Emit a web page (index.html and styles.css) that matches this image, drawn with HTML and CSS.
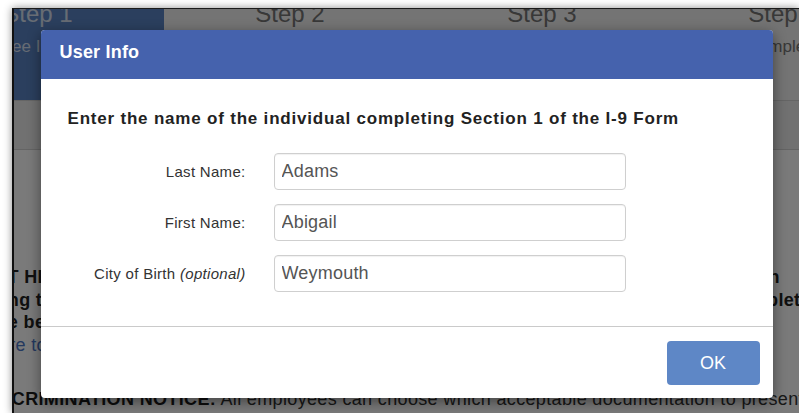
FILE: index.html
```html
<!DOCTYPE html>
<html lang="en">
<head>
<meta charset="utf-8">
<title>Form I-9 – User Info</title>
<link rel="stylesheet" href="styles.css">
</head>
<body>
<div class="window">
  <div class="page">
    <nav class="steps">
      <div class="step step-active">
        <div class="step-title">Step 1</div>
        <div class="step-sub">Employee Information</div>
      </div>
      <div class="step">
        <div class="step-title">Step 2</div>
        <div class="step-sub">Employer Review</div>
      </div>
      <div class="step">
        <div class="step-title">Step 3</div>
        <div class="step-sub">Verification</div>
      </div>
      <div class="step step-last">
        <div class="step-title">Step 4</div>
        <div class="step-sub">Complete</div>
      </div>
    </nav>
    <div class="toolbar"></div>
    <main class="content">
      <p class="notice">
        <span class="line">I-9 START HERE: Employers must ensure all form instructions are available to employees when</span>
        <span class="line">completing this form. Employers are liable for failing to comply with the requirements for completing</span>
        <span class="line">So please be sure to review the form and the Instructions.</span>
      </p>
      <p class="link-line"><a href="#">Select here to view the Form I-9 Instructions.</a></p>
      <p class="anti"><strong>ANTI-DISCRIMINATION NOTICE:</strong> All employees can choose which acceptable documentation to present for Form I-9.</p>
    </main>
  </div>

  <div class="overlay">
    <div class="modal" role="dialog" aria-labelledby="modal-title">
      <header class="modal-header">
        <h2 id="modal-title">User Info</h2>
      </header>
      <div class="modal-body">
        <h3 class="prompt">Enter the name of the individual completing Section 1 of the I-9 Form</h3>
        <div class="form-grid">
          <label for="last">Last Name:</label>
          <input id="last" class="field" type="text" value="Adams">
          <label for="first">First Name:</label>
          <input id="first" class="field" type="text" value="Abigail">
          <label for="city">City of Birth <em>(optional)</em></label>
          <input id="city" class="field" type="text" value="Weymouth">
        </div>
      </div>
      <footer class="modal-footer">
        <button class="btn-ok" type="button">OK</button>
      </footer>
    </div>
  </div>
</div>
</body>
</html>
```

FILE: styles.css
```css
* {
  box-sizing: border-box;
}

html, body {
  margin: 0;
  height: 100%;
}

body {
  background: #ffffff;
  font-family: "Liberation Sans", Arial, sans-serif;
  overflow: hidden;
}

/* browser window frame */
.window {
  position: relative;
  margin: 8px 0 0 12px;
  height: 405px;
  border-top: 1px solid #1a1a1a;
  border-left: 2px solid #111111;
  box-shadow: 0 0 8px rgba(0, 0, 0, 0.45);
  overflow: hidden;
  background: #ffffff;
}

/* page content, scrolled right and down a little */
.page {
  margin: -9px 0 0 -102px;
  width: 1120px;
}

/* wizard step tabs */
.steps {
  display: flex;
  height: 101px;
  background: #f3f3f3;
  border-bottom: 1px solid #d4d4d4;
}

.step {
  width: 252px;
  text-align: center;
  color: #767676;
}

.step-last {
  width: 230px;
}

.step-active {
  background: #5b84c5;
  color: #d8e2f2;
}

.step-title {
  font-size: 24px;
  line-height: 28px;
}

.step-sub {
  margin-top: 9px;
  font-size: 17px;
  line-height: 20px;
  white-space: nowrap;
}

.toolbar {
  height: 49px;
  background: #ececec;
  border-bottom: 1px solid #d2d2d2;
}

.content {
  padding: 116px 0 40px 19px;
  font-size: 18px;
  line-height: 22.5px;
  letter-spacing: 0.35px;
  color: #222222;
}

.content p {
  margin: 0;
  white-space: nowrap;
}

.notice {
  font-weight: bold;
}

.notice .line {
  display: block;
}

.link-line a {
  color: #4d78c6;
  text-decoration: none;
}

.content .anti {
  margin-top: 31.5px;
  color: #333333;
}

.anti strong {
  color: #1d1d1d;
}

/* dimmed backdrop holding the dialog */
.overlay {
  position: absolute;
  inset: 0;
  background: rgba(0, 0, 0, 0.52);
  display: flex;
  justify-content: center;
  align-items: flex-start;
  padding-top: 21px;
}

.modal {
  width: 732px;
  background: #ffffff;
  border-radius: 4px;
  overflow: hidden;
  box-shadow: 0 4px 14px rgba(0, 0, 0, 0.45);
}

.modal-header {
  height: 49px;
  padding: 0 19px;
  background: #4562ad;
}

.modal-header h2 {
  margin: 0;
  font-size: 18px;
  line-height: 45px;
  letter-spacing: 0.2px;
  font-weight: bold;
  color: #ffffff;
}

.modal-body {
  padding: 30px 27px 34px;
}

.prompt {
  margin: 0 0 24px;
  font-size: 17px;
  line-height: 20px;
  letter-spacing: 0.8px;
  font-weight: bold;
  color: #222222;
}

.form-grid {
  display: grid;
  grid-template-columns: 178px 352px;
  column-gap: 28px;
  row-gap: 14px;
  align-items: center;
}

.form-grid label {
  text-align: right;
  font-size: 15px;
  letter-spacing: 0.3px;
  color: #333333;
}

.field {
  height: 37px;
  padding: 0 7px;
  border: 1px solid #cfcfcf;
  border-radius: 4px;
  box-shadow: inset 0 1px 1px rgba(0, 0, 0, 0.06);
  font-family: "Liberation Sans", Arial, sans-serif;
  font-size: 18px;
  letter-spacing: 0.2px;
  color: #555555;
  background: #ffffff;
}

.modal-footer {
  display: flex;
  justify-content: flex-end;
  padding: 14px 13px 13px;
  border-top: 1px solid #cacaca;
}

.btn-ok {
  width: 93px;
  height: 44px;
  border: none;
  border-radius: 4px;
  background: #5e87c6;
  color: #ffffff;
  font-family: "Liberation Sans", Arial, sans-serif;
  font-size: 18px;
}
```
